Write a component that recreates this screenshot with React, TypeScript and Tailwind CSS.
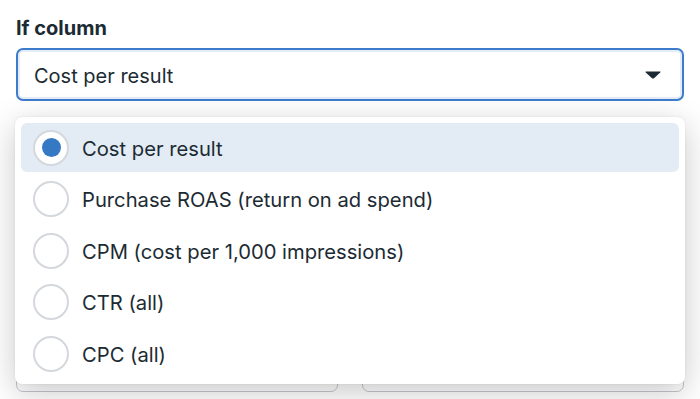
import React, { useState } from "react";

const options = [
  "Cost per result",
  "Purchase ROAS (return on ad spend)",
  "CPM (cost per 1,000 impressions)",
  "CTR (all)",
  "CPC (all)",
];

const Radio: React.FC<{ checked: boolean }> = ({ checked }) => (
  <span className="w-[36px] h-[36px] shrink-0 rounded-full border-2 border-[#d4d8dd] bg-white flex items-center justify-center">
    {checked && <span className="w-[19px] h-[19px] rounded-full bg-[#3578c4]" />}
  </span>
);

const App: React.FC = () => {
  const [selected, setSelected] = useState(0);

  return (
    <div className="relative w-[700px] h-[399px] overflow-hidden bg-white px-4 pt-[15px] text-[#1c2b33] font-['Inter',sans-serif]">
      {/* Field */}
      <label className="block text-[20px] font-bold leading-[26px]">If column</label>
      <button className="mt-[7px] w-full h-[53px] rounded-[7px] border-2 border-[#3d7bcb] ring-2 ring-inset ring-[#e3ecf7] bg-white flex items-center justify-between pl-[16px] pr-[21px] text-left">
        <span className="text-[20px] leading-none pt-[2px]">{options[selected]}</span>
        <svg width="16" height="8" viewBox="0 0 16 8">
          <path d="M1 0.5 H15 Q16 0.5 15.2 1.4 L9 7.2 Q8 8 7 7.2 L0.8 1.4 Q0 0.5 1 0.5 Z" fill="#1c2b33" />
        </svg>
      </button>

      {/* Fields behind the menu */}
      <div className="mt-[16px]">
        <div className="h-[52px] rounded-[7px] border border-[#ccd0d5]" />
        <div className="mt-[16px] h-[52px] rounded-[7px] border border-[#ccd0d5]" />
        <div className="mt-[22px] grid grid-cols-2 gap-[24px]">
          <div className="h-[133px] rounded-[7px] border border-[#c4c8cd] bg-white" />
          <div className="h-[133px] rounded-[7px] border border-[#c4c8cd] bg-white" />
        </div>
      </div>

      {/* Dropdown menu */}
      <div className="absolute left-[15px] top-[117px] w-[670px] h-[267px] rounded-[7px] bg-white shadow-[0_8px_32px_rgba(0,0,0,0.22),0_0_2px_rgba(0,0,0,0.1)] px-[6px] pt-[6px] flex flex-col gap-[2.5px]">
        {options.map((opt, i) => (
          <div
            key={opt}
            onClick={() => setSelected(i)}
            className={
              "h-[49px] shrink-0 rounded-[6px] flex items-center gap-[13px] pl-[12px] cursor-pointer " +
              (i === selected ? "bg-[#e3ecf5]" : "")
            }
          >
            <Radio checked={i === selected} />
            <span className="text-[20.2px] leading-none pt-[3px]">{opt}</span>
          </div>
        ))}
      </div>
    </div>
  );
};

export default App;
